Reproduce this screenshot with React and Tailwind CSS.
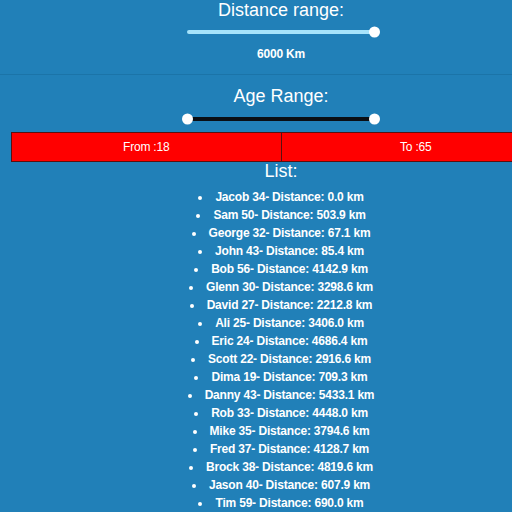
const people = [
  ["Jacob", 34, "0.0"],
  ["Sam", 50, "503.9"],
  ["George", 32, "67.1"],
  ["John", 43, "85.4"],
  ["Bob", 56, "4142.9"],
  ["Glenn", 30, "3298.6"],
  ["David", 27, "2212.8"],
  ["Ali", 25, "3406.0"],
  ["Eric", 24, "4686.4"],
  ["Scott", 22, "2916.6"],
  ["Dima", 19, "709.3"],
  ["Danny", 43, "5433.1"],
  ["Rob", 33, "4448.0"],
  ["Mike", 35, "3794.6"],
  ["Fred", 37, "4128.7"],
  ["Brock", 38, "4819.6"],
  ["Jason", 40, "607.9"],
  ["Tim", 59, "690.0"],
];

export default function App() {
  return (
    <div className="w-[512px] h-[512px] overflow-hidden bg-[#2180b8] text-white font-['Liberation_Sans',Arial,sans-serif]">
      <div className="w-[562px]">
        {/* Distance */}
        <section className="flex flex-col items-center pb-[13px]">
          <h2 className="text-[18px] leading-[20px]">Distance range:</h2>
          <div className="relative w-[188px] h-[11px] mt-[6px] flex items-center">
            <div className="w-full h-[4px] rounded-full bg-[#a6e3fb]" />
            <span className="absolute right-[-5px] top-1/2 -translate-y-1/2 w-[11px] h-[11px] rounded-full bg-white" />
          </div>
          <p className="text-[12px] font-bold mt-[10px] leading-[14px] tracking-[-0.2px]">6000 Km</p>
        </section>
        <div className="h-px bg-[#1b74a8]" />

        {/* Age */}
        <section className="flex flex-col items-center pt-[11px]">
          <h2 className="text-[18px] leading-[20px]">Age Range:</h2>
          <div className="relative w-[188px] h-[11px] mt-[7px] flex items-center">
            <div className="w-full h-[4px] bg-[#0a0f14]" />
            <span className="absolute left-[-5px] top-1/2 -translate-y-1/2 w-[11px] h-[11px] rounded-full bg-white" />
            <span className="absolute right-[-5px] top-1/2 -translate-y-1/2 w-[11px] h-[11px] rounded-full bg-white" />
          </div>
        </section>

        <div className="mx-[11px] mt-[8px] flex h-[30px] bg-[#ff0000] border border-[#5a1010] text-[12px] tracking-[-0.2px]">
          <div className="flex-1 flex items-center justify-center border-r border-[#5a1010]">From :18</div>
          <div className="flex-1 flex items-center justify-center">To :65</div>
        </div>

        <h2 className="text-center text-[18px] leading-[18px]">List:</h2>
        <ul className="list-disc list-inside text-center text-[12px] font-bold leading-[18px] mt-[8px] tracking-[-0.2px]">
          {people.map(([name, age, d]) => (
            <li key={name}>
              {name} {age}- Distance: {d} km
            </li>
          ))}
        </ul>
      </div>
    </div>
  );
}
